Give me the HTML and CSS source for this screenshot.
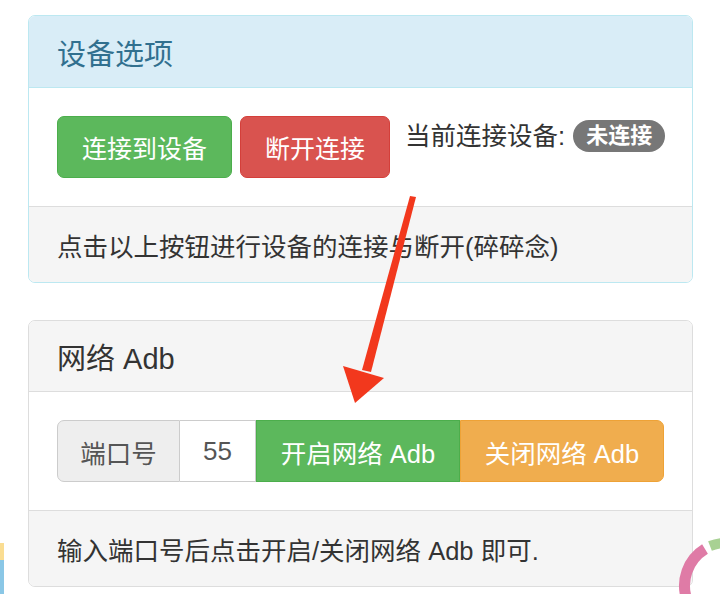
FILE: index.html
```html
<!DOCTYPE html>
<html lang="zh-CN">
<head>
<meta charset="utf-8">
<title>设备选项</title>
<link rel="stylesheet" href="styles.css">
</head>
<body>
<div class="page">
  <section class="panel panel-info">
    <div class="panel-heading">设备选项</div>
    <div class="panel-body device-row">
      <button class="btn btn-success">连接到设备</button>
      <button class="btn btn-danger">断开连接</button>
      <span class="status">当前连接设备:<span class="badge">未连接</span></span>
    </div>
    <div class="panel-footer">点击以上按钮进行设备的连接与断开(碎碎念)</div>
  </section>

  <section class="panel panel-default">
    <div class="panel-heading">网络 Adb</div>
    <div class="panel-body">
      <div class="input-group">
        <span class="addon">端口号</span>
        <input class="port" type="text" value="55">
        <button class="btn btn-success grouped">开启网络 Adb</button>
        <button class="btn btn-warning grouped last">关闭网络 Adb</button>
      </div>
    </div>
    <div class="panel-footer">输入端口号后点击开启/关闭网络 Adb 即可.</div>
  </section>
</div>

<!-- annotation arrow drawn over the panels -->
<svg class="overlay" width="720" height="594" viewBox="0 0 720 594">
  <polygon points="410,196 416,197 371,372 362,370" fill="#f2381d"/>
  <polygon points="343,366 384,378 355,403" fill="#f2381d"/>
  <path d="M687 600 A43 43 0 0 1 705 549" fill="none" stroke="#df7ba6" stroke-width="11"/>
  <path d="M710 546 A43 43 0 0 1 724 543" fill="none" stroke="#a8d193" stroke-width="10"/>
</svg>
<div class="edge-mark yellow"></div>
<div class="edge-mark blue"></div>
</body>
</html>
```

FILE: styles.css
```css
html, body {
  margin: 0;
  padding: 0;
  background: #fff;
}

body {
  font-family: "Liberation Sans", "Noto Sans CJK SC", sans-serif;
  font-size: 25.5px;
  color: #333;
  width: 720px;
  height: 594px;
  overflow: hidden;
  position: relative;
}

.page {
  padding: 15px 27px 0 28px;
  display: flex;
  flex-direction: column;
  gap: 37px;
}

.panel {
  border: 1px solid #ddd;
  border-radius: 7px;
  overflow: hidden;
  background: #fff;
}

.panel-heading {
  height: 71px;
  box-sizing: border-box;
  padding: 0 28px;
  display: flex;
  align-items: center;
  font-size: 29px;
  border-bottom: 1px solid #ddd;
}

.panel-info {
  border-color: #bce8f1;
}

.panel-info .panel-heading {
  height: 72px;
  background: #d9edf7;
  color: #31708f;
  border-bottom-color: #bce8f1;
}

.panel-default .panel-heading {
  background: #f5f5f5;
  color: #333;
}

.panel-body {
  padding: 28px 28px;
  height: 118px;
  box-sizing: border-box;
}

.device-row {
  display: flex;
  align-items: flex-start;
  gap: 8px;
}

.panel-footer {
  height: 76px;
  box-sizing: border-box;
  padding: 0 28px;
  display: flex;
  align-items: center;
  background: #f5f5f5;
  border-top: 1px solid #ddd;
}

.btn {
  font-family: inherit;
  font-size: 25px;
  color: #fff;
  height: 62px;
  padding: 0 24px;
  border: 1px solid transparent;
  border-radius: 7px;
  white-space: nowrap;
  flex-shrink: 0;
  cursor: pointer;
}

.btn-success {
  background: #5cb85c;
  border-color: #4cae4c;
}

.btn-danger {
  background: #d9534f;
  border-color: #d43f3a;
}

.btn-warning {
  background: #f0ad4e;
  border-color: #eea236;
}

.status {
  margin-left: 7px;
  margin-top: 3px;
  display: flex;
  align-items: center;
  gap: 8px;
  white-space: nowrap;
  line-height: 34px;
}

.badge {
  display: inline-block;
  background: #777;
  color: #fff;
  font-size: 22px;
  font-weight: bold;
  line-height: 32px;
  height: 32px;
  padding: 0 13px;
  border-radius: 16px;
}

.input-group {
  display: flex;
  height: 62px;
}

.addon {
  width: 123px;
  flex-shrink: 0;
  box-sizing: border-box;
  display: flex;
  align-items: center;
  justify-content: center;
  background: #eee;
  color: #555;
  border: 1px solid #ccc;
  border-radius: 7px 0 0 7px;
}

.port {
  width: 76px;
  flex-shrink: 0;
  box-sizing: border-box;
  border: 1px solid #ccc;
  border-left: 0;
  font-family: inherit;
  font-size: 26px;
  color: #555;
  text-align: center;
  padding: 0;
  outline: none;
}

.grouped {
  flex: 1;
  height: 62px;
  border-radius: 0;
  padding: 0;
  font-size: 25.5px;
}

.grouped.last {
  border-radius: 0 7px 7px 0;
}

.overlay {
  position: absolute;
  top: 0;
  left: 0;
  pointer-events: none;
}

.edge-mark {
  position: absolute;
  left: 0;
  width: 4px;
}

.edge-mark.yellow {
  top: 543px;
  height: 17px;
  background: #fadd92;
}

.edge-mark.blue {
  top: 560px;
  height: 34px;
  background: #8ac7e6;
}
```
